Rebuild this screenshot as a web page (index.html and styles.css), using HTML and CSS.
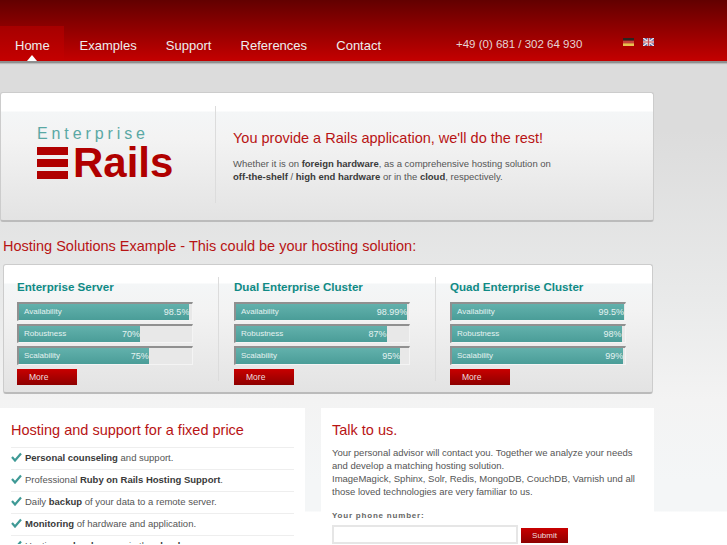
FILE: index.html
```
<!DOCTYPE html>
<html lang="en">
<head>
    <meta charset="UTF-8">
    <meta name="viewport" content="width=device-width, initial-scale=1.0">
    <title>Enterprise Rails</title>
    <link rel="stylesheet" href="styles.css">
</head>
<body>
    <!-- Top bar -->
    <header class="top-bar">
        <nav class="main-nav">
            <a class="nav-link active" href="#">Home</a>
            <a class="nav-link" href="#">Examples</a>
            <a class="nav-link" href="#">Support</a>
            <a class="nav-link" href="#">References</a>
            <a class="nav-link" href="#">Contact</a>
        </nav>
        <div class="phone">+49 (0) 681 / 302 64 930</div>
        <div class="flags">
            <svg class="flag" viewBox="0 0 11 8" aria-label="Deutsch">
                <rect width="11" height="2.7" fill="#2a2420"/>
                <rect y="2.7" width="11" height="2.6" fill="#c8403a"/>
                <rect y="5.3" width="11" height="2.7" fill="#e8c050"/>
            </svg>
            <svg class="flag" viewBox="0 0 11 8" aria-label="English">
                <rect width="11" height="8" fill="#5a5f9c"/>
                <path d="M0 0L11 8M11 0L0 8" stroke="#f0e8ea" stroke-width="1.4"/>
                <path d="M5.5 0V8M0 4H11" stroke="#f0e8ea" stroke-width="2.4"/>
                <path d="M5.5 0V8M0 4H11" stroke="#c84a50" stroke-width="1.2"/>
            </svg>
        </div>
    </header>

    <main class="page">
        <!-- Intro -->
        <section class="hero panel">
            <div class="logo">
                <div class="logo-top">Enterprise</div>
                <div class="logo-main">
                    <div class="logo-bars"><span></span><span></span><span></span></div>
                    <span class="logo-word">Rails</span>
                </div>
            </div>
            <div class="hero-text">
                <h1>You provide a Rails application, we'll do the rest!</h1>
                <p>Whether it is on <b>foreign hardware</b>, as a comprehensive hosting solution on<br>
                <b>off-the-shelf</b> / <b>high end hardware</b> or in the <b>cloud</b>, respectively.</p>
            </div>
        </section>

        <h2 class="section-title">Hosting Solutions Example - This could be your hosting solution:</h2>

        <!-- Plans -->
        <section class="plans panel">
            <div class="plan">
                <h3>Enterprise Server</h3>
                <div class="bar"><div class="fill" style="width: 98.5%"><span>Availability</span><span class="pct">98.5%</span></div></div>
                <div class="bar"><div class="fill" style="width: 70%"><span>Robustness</span><span class="pct">70%</span></div></div>
                <div class="bar"><div class="fill" style="width: 75%"><span>Scalability</span><span class="pct">75%</span></div></div>
                <a class="more-btn" href="#">More</a>
            </div>
            <div class="plan">
                <h3>Dual Enterprise Cluster</h3>
                <div class="bar"><div class="fill" style="width: 98.99%"><span>Availability</span><span class="pct">98.99%</span></div></div>
                <div class="bar"><div class="fill" style="width: 87%"><span>Robustness</span><span class="pct">87%</span></div></div>
                <div class="bar"><div class="fill" style="width: 95%"><span>Scalability</span><span class="pct">95%</span></div></div>
                <a class="more-btn" href="#">More</a>
            </div>
            <div class="plan">
                <h3>Quad Enterprise Cluster</h3>
                <div class="bar"><div class="fill" style="width: 99.5%"><span>Availability</span><span class="pct">99.5%</span></div></div>
                <div class="bar"><div class="fill" style="width: 98%"><span>Robustness</span><span class="pct">98%</span></div></div>
                <div class="bar"><div class="fill" style="width: 99%"><span>Scalability</span><span class="pct">99%</span></div></div>
                <a class="more-btn" href="#">More</a>
            </div>
        </section>

        <!-- Bottom boxes -->
        <div class="bottom">
            <section class="box box-left">
                <h2 class="box-title">Hosting and support for a fixed price</h2>
                <ul class="checks">
                    <li><svg class="check" viewBox="0 0 11 10"><path d="M1 5L4 8.5L10 1.5" fill="none" stroke="#3f9a96" stroke-width="2.2"/></svg><span><b>Personal counseling</b> and support.</span></li>
                    <li><svg class="check" viewBox="0 0 11 10"><path d="M1 5L4 8.5L10 1.5" fill="none" stroke="#3f9a96" stroke-width="2.2"/></svg><span>Professional <b>Ruby on Rails Hosting Support</b>.</span></li>
                    <li><svg class="check" viewBox="0 0 11 10"><path d="M1 5L4 8.5L10 1.5" fill="none" stroke="#3f9a96" stroke-width="2.2"/></svg><span>Daily <b>backup</b> of your data to a remote server.</span></li>
                    <li><svg class="check" viewBox="0 0 11 10"><path d="M1 5L4 8.5L10 1.5" fill="none" stroke="#3f9a96" stroke-width="2.2"/></svg><span><b>Monitoring</b> of hardware and application.</span></li>
                    <li><svg class="check" viewBox="0 0 11 10"><path d="M1 5L4 8.5L10 1.5" fill="none" stroke="#3f9a96" stroke-width="2.2"/></svg><span>Hosting on <b>hardware</b> or in the <b>cloud</b>.</span></li>
                </ul>
            </section>
            <section class="box box-right">
                <h2 class="box-title">Talk to us.</h2>
                <p class="talk-text">Your personal advisor will contact you. Together we analyze your needs and develop a matching hosting solution.<br>
                ImageMagick, Sphinx, Solr, Redis, MongoDB, CouchDB, Varnish und all those loved technologies are very familiar to us.</p>
                <label class="phone-label" for="phone-input">Your phone number:</label>
                <div class="phone-form">
                    <input id="phone-input" class="phone-input" type="text">
                    <button class="submit-btn" type="button">Submit</button>
                </div>
            </section>
        </div>
    </main>
</body>
</html>
```

FILE: styles.css
```
html {
    height: 100%;
    overflow: hidden;
}

body {
    margin: 0;
    font-family: "Liberation Sans", Arial, sans-serif;
    font-size: 10px;
    color: #555;
    background: linear-gradient(to bottom, #dcdcdc 0, #dcdcdc 130px, #e9eaea 300px, #f3f3f3 400px, #f4f6f7 480px, #f4f6f7 511px, #fff 512px);
    height: 545px;
    overflow: hidden;
}

/* Top bar */
.top-bar {
    height: 61px;
    display: flex;
    align-items: flex-end;
    background: linear-gradient(to bottom, #620000, #c40000);
    border-bottom: 2px solid #8f8f8f;
    box-shadow: 0 1px 1px #bbb;
}

.main-nav {
    display: flex;
    width: 435px;
}

.nav-link {
    position: relative;
    height: 35px;
    line-height: 39px;
    padding: 0 14.6px;
    font-size: 13px;
    color: #eee;
    text-decoration: none;
}

.nav-link.active {
    padding: 0 15px;
    width: 34px;
    margin-right: 1px;
    background: linear-gradient(to bottom, #a60000, #c40000);
}

/* small arrow under the active link */
.nav-link.active::after {
    content: "";
    position: absolute;
    left: 27px;
    bottom: 0;
    border-left: 5px solid transparent;
    border-right: 5px solid transparent;
    border-bottom: 6px solid #fff;
}

.phone {
    width: 167px;
    padding-left: 21px;
    height: 35px;
    line-height: 36px;
    font-size: 11.5px;
    color: #e6d4d4;
}

.flags {
    display: flex;
    gap: 9px;
    height: 23px;
}

.flag {
    width: 11px;
    height: 8px;
}

/* Page */
.page {
    width: 654px;
    padding-top: 29px;
}

.panel {
    background: linear-gradient(to bottom, #fff 0, #fff 18px, #f4f6f7 19px, #f3f3f3 45px, #e3e3e3 100%);
    border: 1px solid #ccc;
    border-bottom: 2px solid #bbb;
    border-radius: 3px;
    box-sizing: border-box;
}

.hero {
    height: 130px;
    display: flex;
    padding-top: 13px;
}

.logo {
    width: 215px;
    height: 97px;
    box-sizing: border-box;
    padding: 19px 0 0 36px;
    border-right: 1px solid #dcdcdc;
}

.logo-top {
    font-size: 16px;
    letter-spacing: 3.9px;
    line-height: 18px;
    color: #5aa8a4;
}

.logo-main {
    display: flex;
    align-items: center;
    gap: 5px;
    height: 33px;
    margin-top: 3px;
}

.logo-bars {
    display: flex;
    flex-direction: column;
    gap: 4px;
}

.logo-bars span {
    display: block;
    width: 31px;
    height: 8px;
    background: #b00000;
}

.logo-word {
    font-size: 42px;
    font-weight: bold;
    line-height: 33px;
    color: #b00000;
}

.hero-text {
    padding: 4px 0 0 17px;
}

.hero-text h1 {
    margin: 14px 0 0;
    font-size: 14.5px;
    font-weight: normal;
    line-height: 28px;
    color: #b81414;
}

.hero-text p {
    margin: 5px 0 0;
    font-size: 9.5px;
    line-height: 13px;
    color: #555;
}

.hero-text b, .box b {
    color: #3a3a3a;
}

.section-title {
    margin: 13px 0 0;
    padding-left: 3px;
    font-size: 14.5px;
    font-weight: normal;
    line-height: 22px;
    color: #b81414;
}

/* Plans */
.plans {
    margin: 7px 0 0 3px;
    width: 650px;
    height: 130px;
    display: flex;
    padding-top: 12px;
}

.plan {
    width: 176px;
    height: 104px;
    padding: 0 25px 0 13px;
    border-right: 1px solid #dcdcdc;
}

.plan:nth-child(2) {
    padding-left: 15px;
}

.plan:last-child {
    padding-left: 14px;
    border-right: none;
}

.plan h3 {
    margin: 1px 0 7px;
    font-size: 11.6px;
    line-height: 17px;
    color: #0f8a85;
}

.bar {
    height: 19px;
    margin-bottom: 3px;
    background: #e8e8e8;
    border-top: 2px solid #909090;
    border-left: 2px solid #909090;
    border-right: 1px solid #f4f4f4;
    border-bottom: 1px solid #f4f4f4;
    box-sizing: border-box;
}

.fill {
    height: 100%;
    display: flex;
    justify-content: space-between;
    padding: 0 0 0 5px;
    box-sizing: border-box;
    background: linear-gradient(to bottom, #62b1ac, #4a9d98);
    font-size: 8px;
    line-height: 16px;
    color: #e4f2f0;
}

.pct {
    font-size: 9px;
    line-height: 16px;
}

.more-btn {
    display: block;
    width: 60px;
    height: 16px;
    margin-top: 4px;
    padding-left: 12px;
    box-sizing: border-box;
    background: linear-gradient(to bottom, #c80000, #8e0000);
    font-size: 8.5px;
    line-height: 16px;
    color: #f0dede;
    text-decoration: none;
}

/* Bottom boxes */
.bottom {
    display: flex;
    gap: 16px;
    margin-top: 14px;
}

.box {
    background: #fff;
    box-sizing: border-box;
    height: 136px;
    overflow: hidden;
}

.box-left {
    width: 305px;
    padding: 0 11px;
}

.box-right {
    width: 333px;
    padding: 0 11px;
}

.box-title {
    margin: 12px 0 7px;
    font-size: 14.5px;
    font-weight: normal;
    line-height: 20px;
    color: #b81414;
}

.checks {
    list-style: none;
    margin: 0;
    padding: 0;
    font-size: 9.5px;
}

.checks li {
    display: flex;
    align-items: center;
    gap: 3px;
    height: 18px;
    padding-bottom: 3px;
    border-top: 1px solid #eee;
}

.check {
    width: 11px;
    height: 10px;
}

.talk-text {
    margin: -1px 0 0;
    font-size: 9.5px;
    line-height: 13px;
}

.phone-label {
    display: block;
    margin-top: 13px;
    font-size: 8px;
    font-weight: bold;
    letter-spacing: 0.8px;
    color: #666;
}

.phone-form {
    display: flex;
    align-items: center;
    gap: 3px;
    margin-top: 5px;
}

.phone-input {
    width: 186px;
    height: 19px;
    box-sizing: border-box;
    border: 2px solid #e6e6e6;
    background: #fff;
    margin: 0;
}

.submit-btn {
    width: 47px;
    height: 15px;
    margin-top: 2px;
    padding: 0;
    border: none;
    background: linear-gradient(to bottom, #c80000, #8e0000);
    font-family: "Liberation Sans", Arial, sans-serif;
    font-size: 8px;
    color: #f0dede;
}
```
